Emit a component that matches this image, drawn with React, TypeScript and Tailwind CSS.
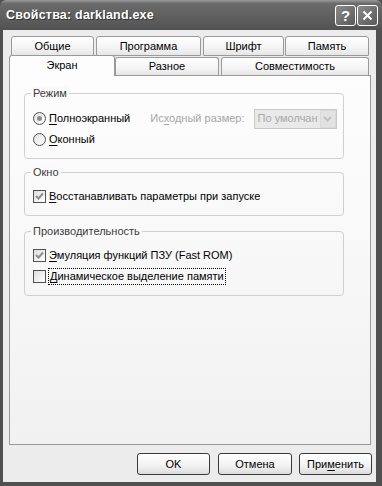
import React from "react";

function U({ children }: { children: React.ReactNode }) {
  return <span className="underline underline-offset-[2px] decoration-[1px]">{children}</span>;
}

function Tab({ label, w, ml = 0, kind }: { label: string; w: string; ml?: number; kind: "top" | "low" | "sel" }) {
  const base =
    "flex justify-center rounded-t-[3px] border border-[#9a9a9a] text-[11px] text-black leading-none whitespace-nowrap";
  if (kind === "sel")
    return (
      <div
        className={`${base} ${w} h-[21px] -mb-[1px] border-b-0 bg-[#fdfdfd] pt-[4px] relative z-20`}
        style={{ marginLeft: ml }}
      >
        {label}
      </div>
    );
  if (kind === "low")
    return (
      <div
        className={`${base} ${w} h-[18px] border-b-0 bg-[linear-gradient(to_bottom,#ffffff,#f4f4f4_60%,#e6e6e6)] pt-[3px]`}
        style={{ marginLeft: ml }}
      >
        {label}
      </div>
    );
  return (
    <div
      className={`${base} ${w} h-[20px] bg-[linear-gradient(to_bottom,#ffffff,#f4f4f4_60%,#e6e6e6)] pt-[4px]`}
      style={{ marginLeft: ml }}
    >
      {label}
    </div>
  );
}

function Radio({ checked }: { checked?: boolean }) {
  return (
    <div className="w-[13px] h-[13px] shrink-0 rounded-full border border-[#505050] bg-[linear-gradient(135deg,#e2e2e2,#ffffff)] flex items-center justify-center">
      {checked && <div className="w-[5px] h-[5px] rounded-full bg-[#8c8c8c]" />}
    </div>
  );
}

function Check({ checked }: { checked?: boolean }) {
  return (
    <div className="w-[13px] h-[13px] shrink-0 border border-[#505050] bg-[linear-gradient(135deg,#dedede,#ffffff)] flex items-center justify-center">
      {checked && (
        <svg width="9" height="9" viewBox="0 0 9 9">
          <polyline points="1,4 3.5,6.5 8,1.5" fill="none" stroke="#8e8e8e" strokeWidth="2" />
        </svg>
      )}
    </div>
  );
}

function Group({ label, h, mt, children }: { label: string; h: string; mt: string; children: React.ReactNode }) {
  return (
    <div className={`relative ${mt} ml-[14px] w-[320px] ${h} rounded-[4px] border border-[#d0d0d0]`}>
      <span className="absolute -top-[8px] left-[6px] px-[2px] bg-[#fafafa] text-[11px] leading-[14px] text-[#3c3c3c]">
        {label}
      </span>
      {children}
    </div>
  );
}

function Btn({ children, ml, w }: { children: React.ReactNode; ml: string; w: string }) {
  return (
    <div
      className={`${ml} ${w} h-[22px] rounded-[3px] border border-[#3a3a3a] bg-[linear-gradient(to_bottom,#ffffff,#f2f2f2_60%,#dcdcdc)] flex items-center justify-center text-[11px] text-black`}
    >
      {children}
    </div>
  );
}

export default function App() {
  return (
    <div className="w-[382px] h-[486px] bg-[#505050] flex flex-col font-['Liberation_Sans',Arial,sans-serif] select-none">
      {/* Title bar */}
      <div className="h-[30px] flex items-center rounded-t-[6px] bg-[linear-gradient(to_bottom,#9a9a9a,#6a6a6a_12%,#5e5e5e_60%,#525252)] px-[6px]">
        <span className="text-white font-bold text-[12.5px] tracking-[0.2px] [text-shadow:1px_1px_0_#333]">
          Свойства: darkland.exe
        </span>
        <div className="ml-auto flex gap-[1px] mr-[-2px]">
          <div className="w-[21px] h-[21px] rounded-[3px] border border-white bg-[linear-gradient(135deg,#8a8a8a,#5a5a5a)] flex items-center justify-center text-white font-bold text-[15px] leading-none">
            ?
          </div>
          <div className="w-[21px] h-[21px] rounded-[3px] border border-white bg-[linear-gradient(135deg,#8a8a8a,#5a5a5a)] flex items-center justify-center">
            <svg width="11" height="11" viewBox="0 0 11 11">
              <path d="M1.5 1.5 L9.5 9.5 M9.5 1.5 L1.5 9.5" stroke="white" strokeWidth="2" />
            </svg>
          </div>
        </div>
      </div>
      {/* Body */}
      <div className="ml-[3px] w-[373px] h-[452px] bg-[#ececec] flex flex-col pt-[6px]">
        <div className="flex h-[20px] pl-[8px]">
          <Tab kind="top" label="Общие" w="w-[83px]" />
          <Tab kind="top" label="Программа" w="w-[105px]" ml={2} />
          <Tab kind="top" label="Шрифт" w="w-[81px]" ml={2} />
          <Tab kind="top" label="Память" w="w-[84px]" ml={1} />
        </div>
        <div className="flex items-end h-[20px] -mt-[1px] pl-[6px] relative z-10">
          <Tab kind="sel" label="Экран" w="w-[106px]" />
          <Tab kind="low" label="Разное" w="w-[104px]" />
          <Tab kind="low" label="Совместимость" w="w-[148px]" ml={2} />
        </div>
        {/* Panel */}
        <div className="ml-[6px] w-[362px] h-[370px] border border-[#9a9a9a] bg-[linear-gradient(to_bottom,#fdfdfd,#f9f9f9_40%,#f1f1f1)] flex flex-col text-[11px] text-black">
          <Group label="Режим" h="h-[66px]" mt="mt-[17px]">
            <div className="pt-[14px] pl-[8px] flex flex-col">
              <div className="h-[21px] flex items-center whitespace-nowrap">
                <Radio checked />
                <span className="ml-[3px]">
                  <U>П</U>олноэкранный
                </span>
                <span className="ml-[20px] text-[#a6a6a6]">
                  Ис<U>х</U>одный размер:
                </span>
                <div className="ml-[9px] w-[83px] h-[20px] border border-[#c8c8c8] bg-[#e9e9e9] flex items-center">
                  <span className="pl-[3px] text-[#a8a8a8] flex-1 overflow-hidden whitespace-nowrap">По умолчан</span>
                  <div className="w-[16px] h-[18px] border border-[#dadada] bg-[#e2e2e2] flex items-center justify-center">
                    <svg width="9" height="6" viewBox="0 0 9 6">
                      <polyline points="1,1 4.5,4.5 8,1" fill="none" stroke="#c0c0c0" strokeWidth="2" />
                    </svg>
                  </div>
                </div>
              </div>
              <div className="h-[21px] flex items-center">
                <Radio />
                <span className="ml-[3px]">
                  <U>О</U>конный
                </span>
              </div>
            </div>
          </Group>
          <Group label="Окно" h="h-[44px]" mt="mt-[13px]">
            <div className="pt-[13px] pl-[8px]">
              <div className="h-[21px] flex items-center">
                <Check checked />
                <span className="ml-[3px]">
                  <U>В</U>осстанавливать параметры при запуске
                </span>
              </div>
            </div>
          </Group>
          <Group label="Производительность" h="h-[65px]" mt="mt-[15px]">
            <div className="pt-[13px] pl-[8px] flex flex-col">
              <div className="h-[21px] flex items-center">
                <Check checked />
                <span className="ml-[3px]">
                  <U>Э</U>муляция функций ПЗУ (Fast ROM)
                </span>
              </div>
              <div className="h-[21px] flex items-center">
                <Check />
                <span className="ml-[2px] px-[1px] border border-dotted border-black leading-[15px]">
                  <U>Д</U>инамическое выделение памяти
                </span>
              </div>
            </div>
          </Group>
        </div>
        {/* Buttons */}
        <div className="mt-[8px] flex">
          <Btn ml="ml-[134px]" w="w-[73px]">OK</Btn>
          <Btn ml="ml-[8px]" w="w-[74px]">Отмена</Btn>
          <Btn ml="ml-[7px]" w="w-[73px]">
            При<U>м</U>енить
          </Btn>
        </div>
      </div>
    </div>
  );
}
